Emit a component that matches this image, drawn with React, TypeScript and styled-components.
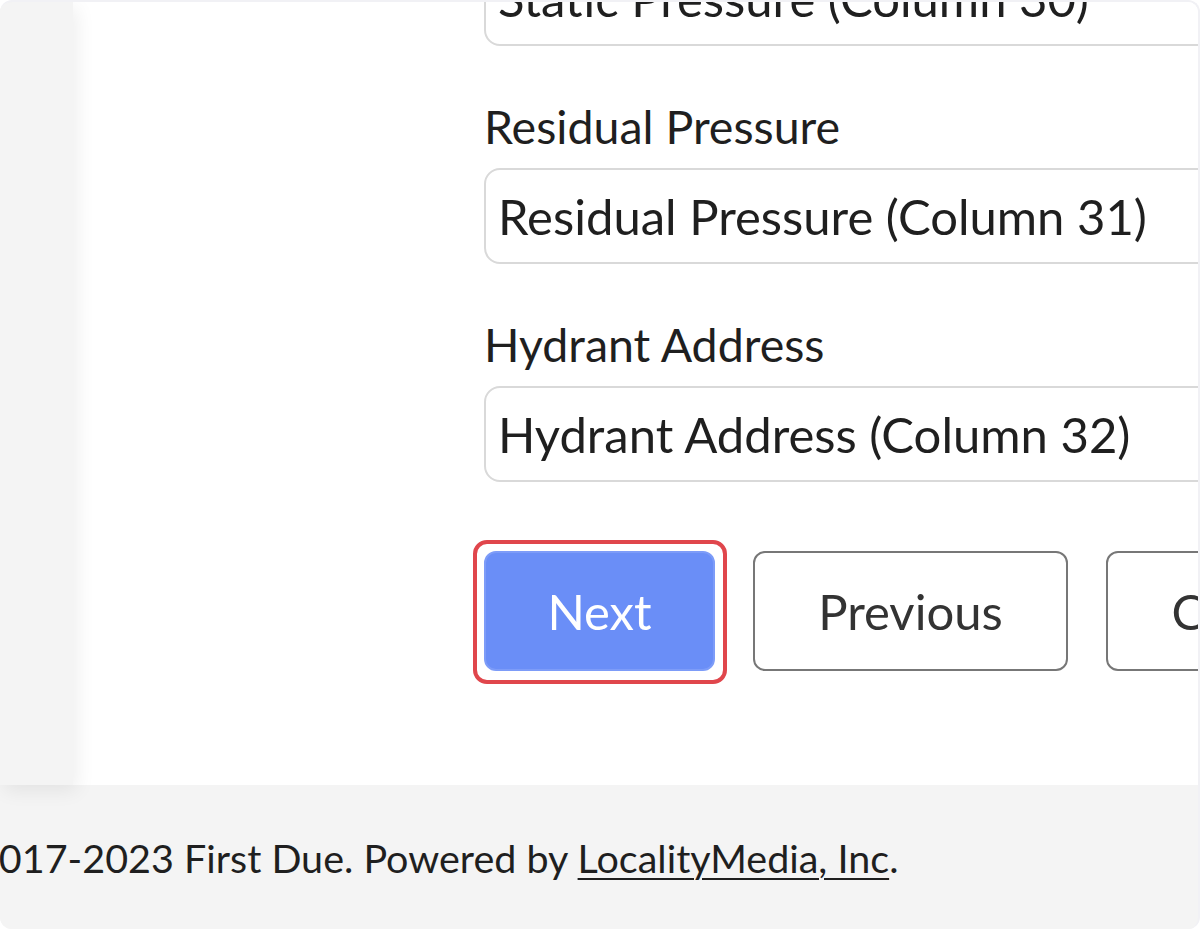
import React from "react";
import styled, { createGlobalStyle } from "styled-components";

const GlobalStyle = createGlobalStyle`
  html, body {
    margin: 0;
    padding: 0;
    background: #ffffff;
  }
  body {
    font-family: Lato, "Open Sans", "Liberation Sans", sans-serif;
    color: #222222;
  }
`;

const colors = {
  page: "#f4f4f4",
  frame: "#f1f1f5",
  text: "#1f1f1f",
  inputBorder: "#d9d9d9",
  primary: "#6a8ef7",
  primaryBorder: "#7d9cf8",
  outline: "#e0464c",
  secondaryBorder: "#777777",
};

// Outer window with rounded corners, clips everything like a cropped screenshot
const Frame = styled.div`
  width: 1200px;
  height: 929px;
  box-sizing: border-box;
  border-top: 2px solid ${colors.frame};
  border-right: 2px solid ${colors.frame};
  border-radius: 12px;
  overflow: hidden;
  background: ${colors.page};
  display: flex;
  flex-direction: column;
`;

const Main = styled.div`
  display: flex;
  height: 783px;
  flex-shrink: 0;
`;

const Sidebar = styled.aside`
  width: 73px;
  flex-shrink: 0;
  background: ${colors.page};
  position: relative;
  z-index: 1;
  box-shadow: 4px 6px 18px rgba(0, 0, 0, 0.07);
`;

const Panel = styled.section`
  flex: 1;
  background: #ffffff;
  overflow: hidden;
  padding-left: 411px;
`;

// Form is scrolled, so the first field starts above the visible area
const Form = styled.form`
  margin-top: -121px;
  width: 900px;
`;

const Field = styled.div`
  margin-bottom: 53px;
`;

const Label = styled.label`
  display: block;
  font-size: 46.5px;
  line-height: 54px;
  color: ${colors.text};
  margin-bottom: 15px;
`;

const Input = styled.input`
  display: block;
  box-sizing: border-box;
  width: 100%;
  height: 96px;
  padding: 0 12px;
  border: 2px solid ${colors.inputBorder};
  border-radius: 16px;
  font-family: inherit;
  font-size: 49px;
  color: ${colors.text};
  background: #ffffff;
  outline: none;
`;

const Actions = styled.div`
  display: flex;
  gap: 38px;
  margin-top: 69px;
`;

const Button = styled.button<{ $primary?: boolean; $width: number }>`
  position: relative;
  box-sizing: border-box;
  width: ${(p) => p.$width}px;
  height: 120px;
  flex-shrink: 0;
  border-radius: 12px;
  font-family: inherit;
  font-size: 49px;
  cursor: pointer;
  background: ${(p) => (p.$primary ? colors.primary : "#ffffff")};
  color: ${(p) => (p.$primary ? "#ffffff" : "#333333")};
  border: 2px solid
    ${(p) => (p.$primary ? colors.primaryBorder : colors.secondaryBorder)};
`;

// Red annotation ring drawn over the highlighted button
const Highlight = styled.span`
  position: absolute;
  inset: -13px -14px -15px -13px;
  border: 4px solid ${colors.outline};
  border-radius: 14px;
  pointer-events: none;
`;

const Footer = styled.footer`
  flex: 1;
  background: ${colors.page};
  display: flex;
  align-items: center;
`;

const FooterText = styled.p`
  margin: 0 0 0 -67px;
  font-size: 39.5px;
  white-space: nowrap;
  color: ${colors.text};

  a {
    color: inherit;
    text-decoration: underline;
    text-decoration-thickness: 2px;
    text-underline-offset: 5px;
  }
`;

const fields = [
  { label: "Static Pressure", value: "Static Pressure (Column 30)" },
  { label: "Residual Pressure", value: "Residual Pressure (Column 31)" },
  { label: "Hydrant Address", value: "Hydrant Address (Column 32)" },
];

export default function App() {
  return (
    <>
      <GlobalStyle />
      <Frame>
        <Main>
          <Sidebar />
          <Panel>
            <Form onSubmit={(e) => e.preventDefault()}>
              {fields.map((f) => (
                <Field key={f.label}>
                  <Label>{f.label}</Label>
                  <Input readOnly value={f.value} />
                </Field>
              ))}
              <Actions>
                <Button type="button" $primary $width={231}>
                  Next
                  <Highlight />
                </Button>
                <Button type="button" $width={315}>
                  Previous
                </Button>
                <Button type="button" $width={276}>
                  Cancel
                </Button>
              </Actions>
            </Form>
          </Panel>
        </Main>
        <Footer>
          <FooterText>
            © 2017-2023 First Due. Powered by <a href="#">LocalityMedia, Inc</a>.
          </FooterText>
        </Footer>
      </Frame>
    </>
  );
}
